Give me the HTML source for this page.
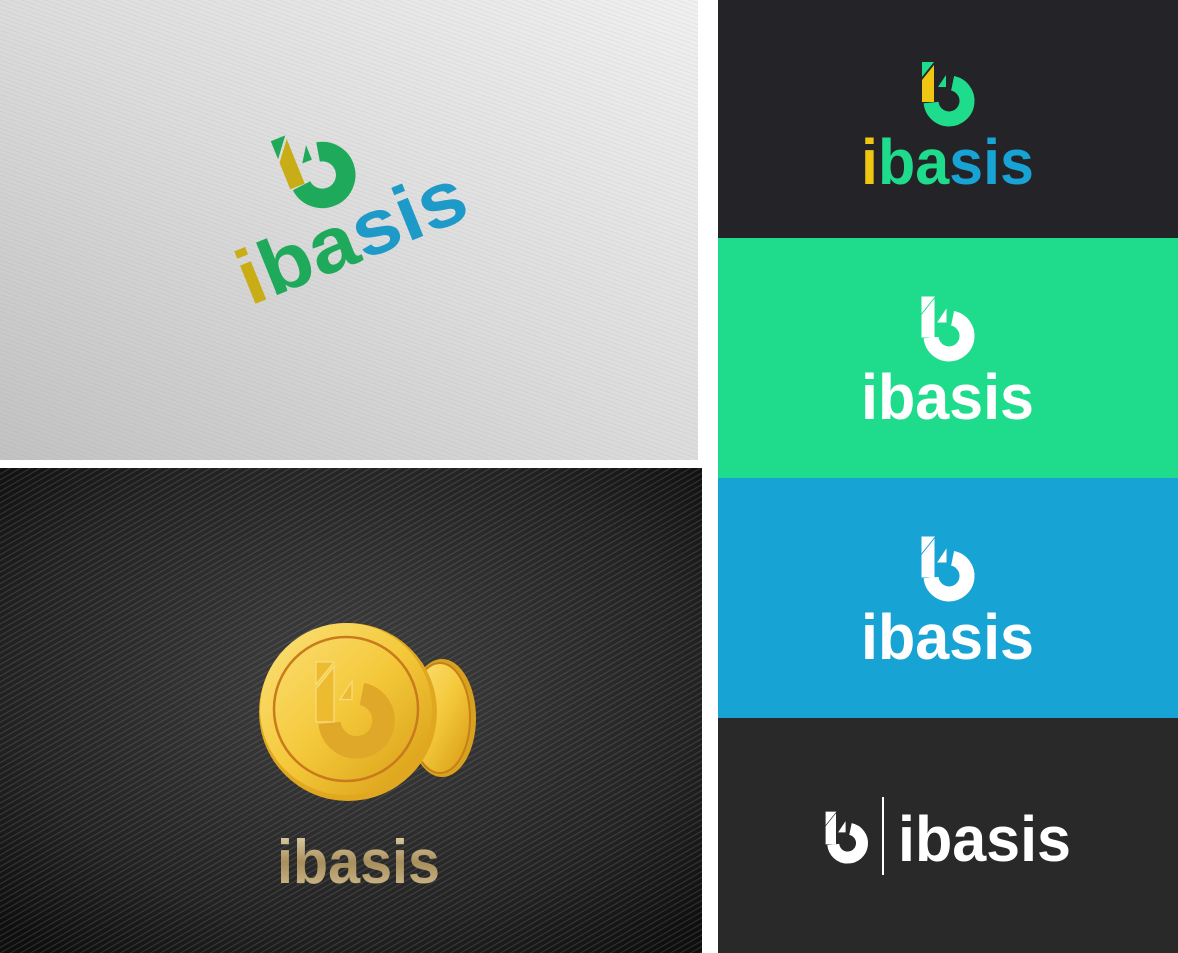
<!DOCTYPE html>
<html><head><meta charset="utf-8"><style>
html,body{margin:0;padding:0;background:#fff;width:1178px;height:953px;overflow:hidden;position:relative;font-family:"Liberation Sans",sans-serif}
</style></head><body>
<svg width="1178" height="953" viewBox="0 0 1178 953" xmlns="http://www.w3.org/2000/svg" style="position:absolute;left:0;top:0">
<defs>
<linearGradient id="paper" x1="0" y1="1" x2="1" y2="0">
<stop offset="0" stop-color="#c2c2c2"/><stop offset="0.5" stop-color="#dcdcdc"/><stop offset="1" stop-color="#f0f0f0"/></linearGradient>
<radialGradient id="denim" cx="0.5" cy="0.45" r="0.7">
<stop offset="0" stop-color="#404040"/><stop offset="0.7" stop-color="#222"/><stop offset="1" stop-color="#0e0e0e"/></radialGradient>
<pattern id="tex" width="5" height="5" patternUnits="userSpaceOnUse" patternTransform="rotate(-30)">
<rect width="5" height="1.2" fill="#999" opacity="0.22"/></pattern>
<pattern id="ptex" width="4" height="4" patternUnits="userSpaceOnUse" patternTransform="rotate(20)">
<rect width="4" height="1" fill="#999" opacity="0.12"/></pattern>
<linearGradient id="gold" x1="0" y1="0" x2="1" y2="1">
<stop offset="0" stop-color="#fbe27a"/><stop offset="0.5" stop-color="#f4c83a"/><stop offset="1" stop-color="#d69a12"/></linearGradient>
<linearGradient id="goldt" x1="0" y1="0" x2="0" y2="1">
<stop offset="0" stop-color="#e9dcb8"/><stop offset="0.5" stop-color="#a88f5c"/><stop offset="1" stop-color="#d8c69a"/></linearGradient>
<g id="mk">
<polygon points="0,0 12,0 0,15"/>
<polygon points="12,3 12,40 0,40 0,18"/>
<path d="M30.6 21.3 A18 18 0 1 1 9.1 40.6" fill="none" stroke-width="15"/>
<polygon points="16,25 24,13 24,25"/>
</g>
</defs>

<rect x="0" y="0" width="698" height="460" fill="url(#paper)"/>
<rect x="0" y="0" width="698" height="460" fill="url(#ptex)"/>
<g transform="translate(250,306) rotate(-22)">
 <g transform="translate(81,-145) scale(1.3)">
  <polygon points="0,0 12,0 0,15" fill="#1fa95a"/>
  <polygon points="12,3 12,40 0,40 0,18" fill="#c9ad17"/>
  <path d="M30.6 21.3 A18 18 0 1 1 9.1 40.6" fill="none" stroke="#1fa95a" stroke-width="15"/>
  <polygon points="16,25 24,13 24,25" fill="#1fa95a"/>
 </g>
 <text x="0" y="0" font-size="78" font-weight="bold" textLength="240" lengthAdjust="spacingAndGlyphs"><tspan fill="#c9ad17">i</tspan><tspan fill="#1fa95a">ba</tspan><tspan fill="#1d9ac8">sis</tspan></text>
</g>

<rect x="0" y="468" width="702" height="485" fill="url(#denim)"/>
<rect x="0" y="468" width="702" height="485" fill="url(#tex)"/>
<ellipse cx="442" cy="718" rx="34" ry="59" fill="#d9a21e"/>
<ellipse cx="440" cy="718" rx="30" ry="55" fill="url(#gold)" stroke="#c5801a" stroke-width="2"/>
<circle cx="348" cy="712" r="89" fill="#e0a820"/>
<circle cx="346" cy="709" r="86" fill="url(#gold)"/>
<circle cx="346" cy="709" r="72" fill="none" stroke="#c87a1c" stroke-width="2.5"/>
<g transform="translate(316,662) scale(1.5)" fill="#ecbb30" stroke="#f8dd80" stroke-width="0.8">
 <polygon points="0,0 12,0 0,15"/>
 <polygon points="12,3 12,40 0,40 0,18"/>
 <path d="M30.6 21.3 A18 18 0 1 1 9.1 40.6" fill="none" stroke="#e0a828" stroke-width="15"/>
 <polygon points="16,25 24,13 24,25"/>
</g>
<text x="277" y="883" font-size="62" font-weight="bold" fill="url(#goldt)" textLength="163" lengthAdjust="spacingAndGlyphs">ibasis</text>

<rect x="718" y="0" width="460" height="238" fill="#242328"/>
<rect x="718" y="238" width="460" height="240" fill="#1fdc8c"/>
<rect x="718" y="478" width="460" height="240" fill="#17a3d3"/>
<rect x="718" y="718" width="460" height="235" fill="#2a2929"/>

<g transform="translate(922,62)">
 <polygon points="0,0 12,0 0,15" fill="#1fdc8c"/>
 <polygon points="12,3 12,40 0,40 0,18" fill="#efc611"/>
 <path d="M30.6 21.3 A18 18 0 1 1 9.1 40.6" fill="none" stroke="#1fdc8c" stroke-width="15"/>
 <polygon points="16,25 24,13 24,25" fill="#1fdc8c"/>
</g>
<text x="861" y="184" font-size="64" font-weight="bold" textLength="173" lengthAdjust="spacingAndGlyphs"><tspan fill="#efc611">i</tspan><tspan fill="#1fdc8c">ba</tspan><tspan fill="#17a3d3">sis</tspan></text>

<use href="#mk" x="922" y="297" fill="#fff" stroke="#fff"/>
<text x="861" y="419" font-size="64" font-weight="bold" fill="#fff" textLength="173" lengthAdjust="spacingAndGlyphs">ibasis</text>

<use href="#mk" x="922" y="537" fill="#fff" stroke="#fff"/>
<text x="861" y="659" font-size="64" font-weight="bold" fill="#fff" textLength="173" lengthAdjust="spacingAndGlyphs">ibasis</text>

<g transform="translate(826,812) scale(0.8)"><use href="#mk" fill="#fff" stroke="#fff"/></g>
<rect x="882" y="797" width="2" height="78" fill="#fff"/>
<text x="898" y="861" font-size="64" font-weight="bold" fill="#fff" textLength="173" lengthAdjust="spacingAndGlyphs">ibasis</text>
</svg>
</body></html>
